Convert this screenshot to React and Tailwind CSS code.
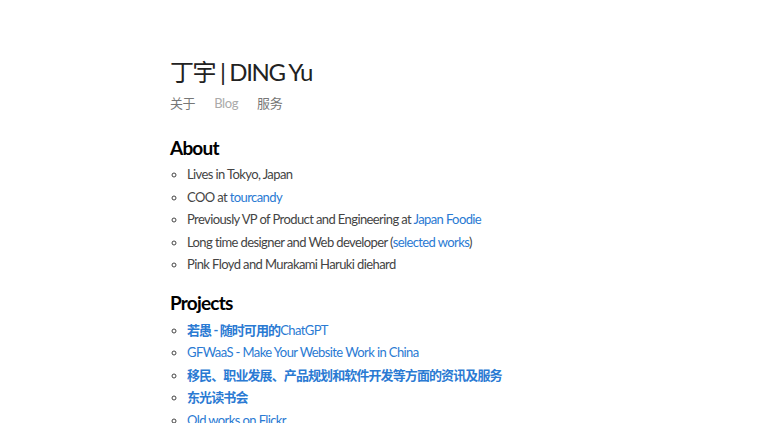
import React from 'react';

const link = 'text-[#2a7ad3]';
const cjk = 'tracking-[-0.9px]';

export default function App() {
  return (
    <div className="min-h-screen bg-white font-['Lato','Noto_Sans_CJK_SC',sans-serif] text-[#444]">
      <div className="pl-[170px] pt-[54px]">
        <h1 className="text-[24px] leading-[36px] font-normal tracking-[-1.4px] text-[#222]">丁宇 | DING Yu</h1>
        <nav className="mt-[3px] flex gap-[19px] text-[13px] leading-[20px] tracking-[-0.4px]">
          <a className="text-[#777]">关于</a>
          <a className="text-[#aaa]">Blog</a>
          <a className="text-[#777]">服务</a>
        </nav>

        <h2 className="mt-[21px] text-[19px] leading-[28px] font-bold tracking-[-0.8px] text-black">About</h2>
        <ul className="mt-[1px] list-[circle] pl-[17px] text-[13px] leading-[22.5px] tracking-[-0.6px]">
          <li>Lives in Tokyo, Japan</li>
          <li>COO at <a className={link}>tourcandy</a></li>
          <li>Previously VP of Product and Engineering at <a className={link}>Japan Foodie</a></li>
          <li>Long time designer and Web developer (<a className={link}>selected works</a>)</li>
          <li>Pink Floyd and Murakami Haruki diehard</li>
        </ul>

        <h2 className="mt-[13px] text-[19px] leading-[28px] font-bold tracking-[-0.8px] text-black">Projects</h2>
        <ul className="mt-[2px] list-[circle] pl-[17px] text-[13px] leading-[22.5px] tracking-[-0.6px]">
          <li><a className={link}><b className={cjk}>若愚 - 随时可用的</b>ChatGPT</a></li>
          <li><a className={link}>GFWaaS - Make Your Website Work in China</a></li>
          <li><a className={link}><b className={cjk}>移民、职业发展、产品规划和软件开发等方面的资讯及服务</b></a></li>
          <li><a className={link}><b className={cjk}>东光读书会</b></a></li>
          <li><a className={link}>Old works on Flickr</a></li>
        </ul>
      </div>
    </div>
  );
}
